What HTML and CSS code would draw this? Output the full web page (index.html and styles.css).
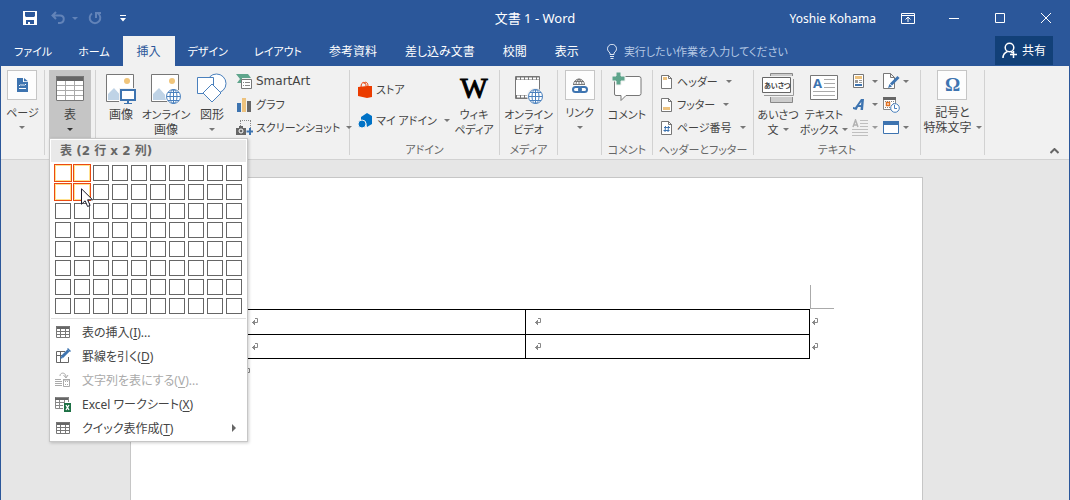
FILE: index.html
```html
<!DOCTYPE html>
<html lang="ja">
<head>
<meta charset="utf-8">
<title>文書 1 - Word</title>
<link rel="stylesheet" href="styles.css">
</head>
<body>
<div class="window">
  <header class="titlebar">
    <div class="quick">
      <button class="quick-btn" aria-label="上書き保存"><svg width="14" height="14" viewBox="0 0 14 14"><path fill="#fff" fill-rule="evenodd" d="M0 0h14v14H0zM2 1v4l1 1h8l1-1V1zM3 9v4h2v-2h2v2h4V9z"/></svg></button>
      <button class="quick-btn dim wide" aria-label="元に戻す"><svg width="14" height="14" viewBox="0 0 14 14" fill="none" stroke="currentColor" stroke-width="2"><path d="M5 1L1.500 4.500 5 8M2 4.500h7c5 0 5 7 0 7.500H7"/></svg><span class="arrow"></span></button>
      <button class="quick-btn dim" aria-label="やり直し"><svg width="14" height="14" viewBox="0 0 14 14" fill="none" stroke="currentColor" stroke-width="2"><path d="M4 2.500a5.300 5.300 0 1 0 6 0M8 7V2h5"/></svg></button>
      <button class="quick-btn last" aria-label="カスタマイズ"><svg width="6" height="7" viewBox="0 0 6 7" fill="#fff"><path d="M0 0h6v1H0zM0 3h6L3 6.500z"/></svg></button>
    </div>
    <h1 class="title">文書 1 - Word</h1>
    <div class="controls">
      <span class="user">Yoshie Kohama</span>
      <button class="ctl" aria-label="リボンの表示オプション"><svg width="14" height="11" viewBox="0 0 14 11" fill="none" stroke="#fff"><path d="M.5.5h13v10H.5zM.5 2.500h13M7 9V4M4.500 6.500L7 4l2.500 2.500"/></svg></button>
      <button class="ctl" aria-label="最小化"><svg width="10" height="10" viewBox="0 0 10 10" stroke="#fff"><path d="M0 5.500h10"/></svg></button>
      <button class="ctl" aria-label="最大化"><svg width="10" height="10" viewBox="0 0 10 10" fill="none" stroke="#fff"><path d="M.5.5h9v9h-9z"/></svg></button>
      <button class="ctl" aria-label="閉じる"><svg width="10" height="10" viewBox="0 0 10 10" stroke="#fff"><path d="M0 0l10 10M10 0L0 10"/></svg></button>
    </div>
  </header>

  <nav class="tabs">
    <button class="tab kana">ファイル</button>
    <button class="tab kana">ホーム</button>
    <button class="tab active">挿入</button>
    <button class="tab kana">デザイン</button>
    <button class="tab kana">レイアウト</button>
    <button class="tab">参考資料</button>
    <button class="tab">差し込み文書</button>
    <button class="tab">校閲</button>
    <button class="tab">表示</button>
    <label class="tell kana"><svg width="10" height="15" viewBox="0 0 10 15" fill="none" stroke="#dfe7f3"><path d="M3 10.500V9C1.500 7.500.5 6.500.5 4.800a4.300 4.300 0 0 1 9 0C9.500 6.500 8.500 7.500 7 9v1.500zM3 12.500h4M3.500 14.500h3"/></svg><input type="text" placeholder="実行したい作業を入力してください" aria-label="操作アシスト"></label>
    <button class="share"><svg width="16" height="17" viewBox="0 0 16 17" fill="none" stroke="#fff" stroke-width="1.500"><circle cx="7.500" cy="5.500" r="4.300"/><path d="M1 16c0-3.500 2-5.500 4.500-6.500M9 9.500l1.500 1.500M11.500 9v7M8 12.500h7"/></svg>共有</button>
  </nav>

  <section class="ribbon">
    <div class="group g-page">
      <div class="body">
        <button class="big boxed kana"><span class="icon"><svg width="11" height="14" viewBox="0 0 11 14"><path fill="#3e74b0" d="M0 0h6v4h5v10H0zM7 0l4 3.200H7z"/><path fill="none" stroke="#fff" d="M2 7.500h1l1-1 1 1 1-1 1 1 1-1h1M2 10.500h7"/></svg></span><span>ページ</span><span class="line"><span class="arrow"></span></span></button>
      </div>
    </div>

    <div class="group g-table">
      <div class="body">
        <button class="big pressed" aria-expanded="true"><span class="icon"><svg width="28" height="25" viewBox="0 0 28 25"><path fill="#fff" d="M0 0h28v25H0z"/><path fill="#666" d="M0 0h28v5H0z"/><path fill="none" stroke="#aaa" d="M1 9.500h26M1 14.500h26M1 19.500h26M9.500 5v19M18.500 5v19"/><path fill="none" stroke="#777" d="M.5.5h27v24H.5z"/></svg></span><span>表</span><span class="line"><span class="arrow dark"></span></span></button>
      </div>
      <div class="menu">
        <h2 class="menu-title">表 (2 行 x 2 列)</h2>
        <div class="picker"></div>
        <ul class="items">
          <li><button class="item"><svg width="16" height="16" viewBox="0 0 16 16"><path fill="#666" d="M1 2h14v3H1z"/><path fill="none" stroke="#777" d="M1.500 2.500h13v11h-13zM1 7.500h14M1 10.500h14M5.500 5v9M10.500 5v9"/></svg><span>表の挿入(<u>I</u>)...</span></button></li>
          <li><button class="item"><svg width="16" height="16" viewBox="0 0 16 16"><path fill="none" stroke="#666" d="M10 3.500H1.500v11h12V9M1 7.500h7M5.500 4v10"/><path stroke="#3e74b0" stroke-width="3" d="M13.500 2.500L7 9"/><path fill="#3e74b0" d="M5 11l1-3 2 2zM13 0l3 3-1 1-3-3z"/></svg><span>罫線を引く(<u>D</u>)</span></button></li>
          <li><button class="item" disabled><svg width="16" height="16" viewBox="0 0 16 16"><path fill="none" stroke="#aaa" d="M0 7.500h6M0 9.500h7M0 11.500h7M0 13.500h7M5 4c0-4 6-4 6 1M8.500 3l2.500 3 2-3M8.500 7.500h6v7h-6z"/><path fill="#aaa" d="M10 9h1v1h-1zM12 9h1v1h-1zM10 12h1v1h-1zM12 12h1v1h-1zM8 7h7v1.500H8z"/></svg><span>文字列を表にする(<u>V</u>)...</span></button></li>
          <li><button class="item"><svg width="16" height="16" viewBox="0 0 16 16"><path fill="#666" d="M0 1h14v3H0z"/><path fill="none" stroke="#888" d="M.5 1.500h13V6M.5 4v8.500H8M0 6.500h9M0 9.500h8M4.500 4v8M9.500 4v3"/><path fill="#1e7145" d="M9 7h7v9H9z"/><path stroke="#fff" stroke-width="1.300" d="M11 9l3 5M14 9l-3 5"/></svg><span>Excel ワークシート(<u>X</u>)</span></button></li>
          <li><button class="item"><svg width="16" height="16" viewBox="0 0 16 16"><path fill="#666" d="M1 2h14v3H1z"/><path fill="none" stroke="#777" d="M1.500 2.500h13v11h-13zM1 7.500h14M1 10.500h14M5.500 5v9M10.500 5v9"/></svg><span>クイック表作成(<u>T</u>)</span><i class="sub"></i></button></li>
        </ul>
        <svg class="cursor" width="13" height="20" viewBox="0 0 13 20"><path fill="#fff" stroke="#1a1a2a" d="M.5.8v15.400l3.600-3.400 2.500 5.700 2.500-1.100-2.500-5.600h5z"/></svg>
      </div>
    </div>

    <div class="group g-illust">
      <div class="body">
        <button class="big w-42"><span class="icon"><svg width="30" height="32" viewBox="0 0 30 32"><path fill="#fff" stroke="#777" d="M.5 2.500h27v27H.5z"/><path fill="#bfd3e6" d="M2 28V22l6-6 8 9v3z"/><circle cx="21" cy="9" r="3" fill="#f0c57c"/><path fill="#f1f1f1" d="M13 16h17v16H13z"/><path fill="#fff" stroke="#3e74b0" stroke-width="2" d="M15 18h14v10H15z"/><path fill="#3e74b0" d="M21 28h2v3h-2zM18 31h8v1h-8z"/></svg></span><span>画像</span></button>
        <button class="big w-48"><span class="icon"><svg width="30" height="32" viewBox="0 0 30 32"><path fill="#fff" stroke="#777" d="M.5 2.500h27v27H.5z"/><path fill="#bfd3e6" d="M2 28V22l6-6 8 9v3z"/><circle cx="21" cy="9" r="3" fill="#f0c57c"/><circle cx="22" cy="24" r="8" fill="#fff"/><g fill="none" stroke="#4a80bd"><circle cx="22.500" cy="24.500" r="7"/><ellipse cx="22.500" cy="24.500" rx="3.500" ry="7"/><path d="M22.500 17.500v14M15.500 24.500h14M17 20.500h11M17 28.500h11"/></g></svg></span><span class="kana">オンライン</span><span>画像</span></button>
        <button class="big w-44"><span class="icon"><svg width="30" height="32" viewBox="0 0 30 32" fill="#fff" stroke="#4a80bd"><circle cx="19.500" cy="11.500" r="9.500"/><path d="M.5 5.500h16v16H.5z"/><path d="M15 12l9 9-9 9-9-9z"/></svg></span><span>図形</span><span class="line"><span class="arrow"></span></span></button>
        <div class="rows kana">
          <button class="small"><svg width="17" height="17" viewBox="0 0 17 17"><path fill="#5fa58c" d="M0 1h12l3 4H6v5H1l3-4z"/><path fill="#fff" stroke="#777" d="M5.500 6.500h10v9h-10z"/><path stroke="#888" d="M7 9.500h1M9 9.500h5M7 12.500h1M9 12.500h5"/></svg><span class="latin">SmartArt</span></button>
          <button class="small"><svg width="17" height="17" viewBox="0 0 17 17"><path fill="#3e74b0" d="M1 7h4v9H1z"/><path fill="#edc27e" d="M6 2h4v14H6z"/><path fill="#666" d="M11 5h4v11h-4z"/></svg><span>グラフ</span></button>
          <button class="small"><svg width="17" height="17" viewBox="0 0 17 17"><path fill="none" stroke="#888" stroke-dasharray="1 1" d="M4 1.500h11M4.500 2v5M14.500 2v7"/><path fill="#666" d="M0 9h3V7h4v2h3v7H0z"/><circle cx="5" cy="12" r="2" fill="#666" stroke="#fff"/><path fill="#3e74b0" d="M13 9h2v2.500h2.500v2H15V16h-2v-2.500h-2.500v-2H13z"/></svg><span>スクリーンショット</span><span class="arrow"></span></button>
        </div>
      </div>
    </div>

    <div class="group g-addin">
      <div class="body kana">
        <div class="rows roomy">
          <button class="small"><svg width="14" height="17" viewBox="0 0 14 17"><path fill="#eb3c00" d="M0 6l9-1v12l-9-2zM9 5h5v11l-5 1z"/><path fill="none" stroke="#eb3c00" d="M3 6c0-6 5-6 5-1M6 3c1-3 4-2 4 2"/></svg><span>ストア</span></button>
          <button class="small"><svg width="14" height="15" viewBox="0 0 14 15"><path fill="#0072c6" d="M3 4l6-4 5 3v8l-5 3-1-5-5-2z"/><circle cx="4" cy="11" r="4" fill="#0072c6" stroke="#f1f1f1"/></svg><span>マイ アドイン</span><span class="arrow"></span></button>
        </div>
        <button class="big w-48"><span class="icon wiki">W</span><span>ウィキ<br>ペディア</span></button>
      </div>
      <div class="caption">アドイン</div>
    </div>

    <div class="group g-media">
      <div class="body kana">
        <button class="big w-56"><span class="icon"><svg width="30" height="32" viewBox="0 0 30 32"><path fill="#fff" stroke="#777" d="M1.500 4.500h24v22h-24z"/><path fill="none" stroke="#777" stroke-width="3" d="M1 6.500h25M1 24.500h25"/><path fill="none" stroke="#fff" stroke-width="2" stroke-dasharray="3 1" d="M3 6.500h22M3 24.500h22"/><circle cx="21" cy="24" r="8" fill="#f1f1f1"/><g fill="#fff" stroke="#4a80bd"><circle cx="21.500" cy="24.500" r="7"/><ellipse cx="21.500" cy="24.500" rx="3.500" ry="7"/><path d="M21.500 17.500v14M14.500 24.500h14M16 20.500h11M16 28.500h11"/></g></svg></span><span>オンライン<br>ビデオ</span></button>
      </div>
      <div class="caption">メディア</div>
    </div>

    <div class="group g-link">
      <div class="body">
        <button class="big boxed kana"><span class="icon"><svg width="16" height="16" viewBox="0 0 16 16" fill="none"><g stroke="#777"><path d="M1.500 8a5.500 6 0 0 1 11 0M1 7.500h12M2 4.500h10M7 2v6M4 8c0-3 1-5 3-6 2 1 3 3 3 6"/></g><g stroke="#3e74b0" stroke-width="2"><rect x="1" y="10" width="8" height="5" rx="2.500"/><rect x="7" y="10" width="8" height="5" rx="2.500"/></g></svg></span><span>リンク</span><span class="line"><span class="arrow"></span></span></button>
      </div>
    </div>

    <div class="group g-comment">
      <div class="body">
        <button class="big w-48 kana"><span class="icon"><svg width="30" height="32" viewBox="0 0 30 32"><path fill="#fff" stroke="#777" d="M4 4.500h23a2 2 0 0 1 2 2v15a2 2 0 0 1-2 2H14l-5 5v-5H4a1.500 1.500 0 0 1-1.500-1.500V6z"/><path fill="#5fa58c" stroke="#f1f1f1" d="M4 0h5v4h4v5H9v4H4V9H0V4h4z"/></svg></span><span>コメント</span></button>
      </div>
      <div class="caption">コメント</div>
    </div>

    <div class="group g-header">
      <div class="body">
        <div class="rows kana">
          <button class="small"><svg width="11" height="14" viewBox="0 0 11 14"><path fill="#fff" stroke="#777" d="M.5.5h7l3 3v10H.5z"/><path fill="none" stroke="#777" d="M7.500 0v3.500H11"/><path fill="#edc27e" d="M2 2h4v3H2z"/></svg><span>ヘッダー</span><span class="arrow"></span></button>
          <button class="small"><svg width="11" height="14" viewBox="0 0 11 14"><path fill="#fff" stroke="#777" d="M.5.5h7l3 3v10H.5z"/><path fill="none" stroke="#777" d="M7.500 0v3.500H11"/><path fill="#edc27e" d="M2 9h7v3H2z"/></svg><span>フッター</span><span class="arrow"></span></button>
          <button class="small"><svg width="11" height="14" viewBox="0 0 11 14"><path fill="#fff" stroke="#777" d="M.5.5h7l3 3v10H.5z"/><path fill="none" stroke="#777" d="M7.500 0v3.500H11"/><path stroke="#3e74b0" d="M4.500 5L4 11M7.500 5L7 11M3 6.500h6M2.500 9.500h6"/></svg><span>ページ番号</span><span class="arrow"></span></button>
        </div>
      </div>
      <div class="caption">ヘッダーとフッター</div>
    </div>

    <div class="group g-text">
      <div class="body">
        <button class="big w-46 kana"><span class="icon"><svg width="32" height="32" viewBox="0 0 32 32"><path fill="#ccc" stroke="#888" d="M8.500 1.500h22v5h-22zM8.500 24.500h22v6h-22z"/><path fill="#f1f1f1" d="M0 4h32v21H0z"/><path fill="#fff" stroke="#666" d="M.5 5.500h28v15H.5z"/><path fill="none" stroke="#999" d="M2 23.500h29.500V7"/><text x="2" y="16" font-size="7" font-weight="700" fill="#444">あいさつ</text></svg></span><span>あいさつ</span><span class="line">文<span class="arrow"></span></span></button>
        <button class="big w-46 kana"><span class="icon"><svg width="28" height="32" viewBox="0 0 28 32"><path fill="#fff" stroke="#777" d="M.5 3.500h27v24H.5z"/><path fill="none" stroke="#aaa" d="M14 7.500h11M14 11.500h11M14 15.500h11M3 19.500h22M3 23.500h22"/><text x="3" y="16" font-size="13" font-weight="700" fill="#3e74b0">A</text></svg></span><span>テキスト</span><span class="line">ボックス<span class="arrow"></span></span></button>
        <div class="rows tools first">
          <button class="tool" aria-label="クイック パーツ"><svg width="17" height="17" viewBox="0 0 17 17"><path fill="#fff" stroke="#777" d="M1.500 1.500h10v13h-10z"/><path fill="#edc27e" d="M3 3h7v3H3z"/><path fill="#999" d="M3 7h3v3H3zM7 7h3v1H7zM7 9h3v1H7z"/><path fill="#3e74b0" d="M3 11h7v2H3z"/></svg><span class="arrow"></span></button>
          <button class="tool" aria-label="ワードアート"><svg width="17" height="17" viewBox="0 0 17 17"><path fill="#3e74b0" fill-rule="evenodd" d="M1 11l2 .5L9 3h3l-1 11H8.500l.3-3H6l-1.500 3L1 13zM7 9h2l.3-3z"/></svg><span class="arrow"></span></button>
          <button class="tool" aria-label="ドロップ キャップ" disabled><svg width="17" height="17" viewBox="0 0 17 17"><path fill="none" stroke="#aaa" d="M8 1.500h8M8 4.500h8M8 7.500h8M0 10.500h16M0 13.500h16M0 16.500h16"/><path fill="none" stroke="#999" stroke-width="1.500" d="M1 8l2.500-7L6 8M2 6h3"/></svg><span class="arrow"></span></button>
        </div>
        <div class="rows tools">
          <button class="tool" aria-label="署名欄"><svg width="17" height="17" viewBox="0 0 17 17"><path fill="#fff" stroke="#777" d="M.5.5h7l4 4v11H.5zM7.500.5v4h4"/><path stroke="#3e74b0" stroke-width="3" d="M15.500 4L8 11.500"/><path fill="#3e74b0" d="M5 15l1.500-4 2.500 2.500z"/></svg><span class="arrow"></span></button>
          <button class="tool" aria-label="日付と時刻"><svg width="17" height="17" viewBox="0 0 17 17"><path fill="#fff" stroke="#888" d="M.5 1.500h12v12H.5z"/><path fill="#666" d="M0 1h13v3H0z"/><path stroke="#888" stroke-dasharray="1 1" d="M2 5.500h10M2 11.500h5M10.500 5v4"/><path fill="#fff" stroke="#e07020" stroke-width="1.500" d="M3.500 6.500h3v3h-3z"/><circle cx="12" cy="12" r="4.300" fill="#fff" stroke="#4a80bd"/><path fill="none" stroke="#4a80bd" d="M11.500 9v3.500H14"/></svg></button>
          <button class="tool" aria-label="オブジェクト"><svg width="17" height="17" viewBox="0 0 17 17"><path fill="#fff" stroke="#3e74b0" d="M.5 2.500h15v12H.5z"/><path fill="#3e74b0" d="M0 2h16v4H0z"/></svg><span class="arrow"></span></button>
        </div>
      </div>
      <div class="caption">テキスト</div>
    </div>

    <div class="group g-symbol">
      <div class="body">
        <button class="big boxed"><span class="icon omega">Ω</span><span>記号と</span><span class="line">特殊文字<span class="arrow"></span></span></button>
      </div>
    </div>

    <button class="collapse" aria-label="リボンを折りたたむ"><svg width="9" height="6" viewBox="0 0 9 6" fill="none" stroke="#666" stroke-width="2"><path d="M.5 5l4-4 4 4"/></svg></button>
  </section>

  <main class="workspace">
    <article class="page">
      <i class="corner"></i>
      <table class="doc-table">
        <tr><td><svg class="mark" width="8" height="8" viewBox="0 0 8 8"><path d="M4 .5h2.500v4H1M3.500 2v5M2.500 3v3"/></svg></td><td><svg class="mark" width="8" height="8" viewBox="0 0 8 8"><path d="M4 .5h2.500v4H1M3.500 2v5M2.500 3v3"/></svg></td><td class="end"><svg class="mark" width="8" height="8" viewBox="0 0 8 8"><path d="M4 .5h2.500v4H1M3.500 2v5M2.500 3v3"/></svg></td></tr>
        <tr class="last"><td><svg class="mark" width="8" height="8" viewBox="0 0 8 8"><path d="M4 .5h2.500v4H1M3.500 2v5M2.500 3v3"/></svg></td><td><svg class="mark" width="8" height="8" viewBox="0 0 8 8"><path d="M4 .5h2.500v4H1M3.500 2v5M2.500 3v3"/></svg></td><td class="end"><svg class="mark" width="8" height="8" viewBox="0 0 8 8"><path d="M4 .5h2.500v4H1M3.500 2v5M2.500 3v3"/></svg></td></tr>
      </table>
      <p class="para"><svg class="mark" width="8" height="8" viewBox="0 0 8 8"><path d="M4 .5h2.500v4H1M3.500 2v5M2.500 3v3"/></svg></p>
    </article>
  </main>
</div>
<script src="script.js"></script>
</body>
</html>
```
FILE: styles.css
```css
* { box-sizing: border-box; }

body {
  margin: 0;
  font: 12px/15px "Noto Sans", "Noto Sans CJK JP", sans-serif;
  font-feature-settings: "palt";
  color: #444;
}

button, input {
  margin: 0;
  padding: 0;
  border: 0;
  background: none;
  font: inherit;
  font-feature-settings: inherit;
  color: inherit;
}

svg { display: block; flex: none; }

.window {
  display: flex;
  flex-direction: column;
  min-height: 100vh;
  border: solid #2b579a;
  border-width: 0 1px;
  overflow: hidden;
}

/* Title bar */
.titlebar {
  display: grid;
  grid-template-columns: 1fr auto 1fr;
  align-items: center;
  height: 36px;
  background: #2b579a;
  color: #fff;
}

.quick { display: flex; align-items: center; padding-left: 22px; }
.quick-btn { display: flex; align-items: center; gap: 7px; height: 34px; margin-right: 14px; }
.quick-btn.wide { margin-right: 10px; }
.quick-btn.last { margin-left: 4px; }
.dim { color: #6283b8; }
.dim .arrow { border-top-color: #6283b8; }
.title { margin: 0; font-size: 13px; font-weight: 400; }
.controls { display: flex; align-items: center; justify-content: flex-end; }
.user { margin-right: 9px; font-size: 12px; white-space: nowrap; }
.ctl { display: flex; align-items: center; justify-content: center; width: 46px; height: 32px; }

/* Tabs */
.tabs { display: flex; align-items: stretch; height: 30px; background: #2b579a; color: #fff; }
.tab { padding: 0 14px; white-space: nowrap; }
.tab.kana { padding: 0 13px; }
.tab.active { background: #f1f1f1; color: #2b579a; }
.tell { display: flex; flex: 1; align-items: center; gap: 7px; margin-left: 14px; }
.tell input { flex: 1; min-width: 0; height: 20px; }
.tell input::placeholder { color: #b5c8e4; opacity: 1; }
.share {
  display: flex;
  align-items: center;
  justify-content: center;
  gap: 4px;
  width: 58px;
  height: 29px;
  margin-right: 16px;
  background: #124078;
}

/* Labels written mostly in kana are set one size down */
.kana { font-size: 11px; }

/* Ribbon */
.ribbon {
  display: flex;
  padding: 4px 0;
  border-bottom: 1px solid #d2d2d2;
  background: #f1f1f1;
}
.group {
  display: flex;
  flex: none;
  flex-direction: column;
  height: 85px;
  border-right: 1px solid #d2d2d2;
}
.body { display: flex; justify-content: center; height: 73px; }
.caption { height: 12px; font-size: 11px; line-height: 14px; text-align: center; white-space: nowrap; color: #666; }

.g-page, .g-link { width: 44px; }
.g-table, .g-comment { width: 51px; }
.g-illust { width: 254px; }
.g-addin { width: 150px; }
.g-media { width: 58px; }
.g-header { width: 101px; }
.g-text { width: 167px; }
.g-symbol { width: 64px; }
.g-table .body, .g-illust .body, .g-addin .body, .g-header .body, .g-text .body { justify-content: flex-start; }
.g-table .body, .g-illust .body { padding-left: 4px; }
.g-addin .body, .g-header .body { padding-left: 8px; }
.g-text .body { padding-left: 1px; }

.big {
  display: flex;
  flex: none;
  flex-direction: column;
  align-items: center;
  padding-top: 2px;
  white-space: nowrap;
}
.big .icon { display: flex; align-items: center; justify-content: center; height: 32px; margin-bottom: 3px; }
.big.boxed { padding-top: 0; }
.boxed .icon { width: 30px; height: 30px; margin-bottom: 5px; border: 1px solid #c6c6c6; background: #fdfdfd; }
.pressed { width: 42px; height: 69px; background: #c5c5c5; }
.w-42 { width: 42px; }
.w-44 { width: 44px; }
.w-46 { width: 46px; }
.w-48 { width: 48px; }
.w-56 { width: 56px; }

.line { display: flex; align-items: center; justify-content: center; gap: 4px; height: 15px; }
.arrow { flex: none; border: solid transparent; border-width: 3px 3px 0; border-top-color: #777; }
.arrow.dark { border-top-color: #333; }

.big .wiki { font: 400 29px/32px "Liberation Serif", serif; color: #000; -webkit-text-stroke: 1px #000; }
.big .omega { font: 700 19px/28px "Liberation Serif", serif; color: #3e74b0; }

.rows { display: flex; flex: none; flex-direction: column; }
.g-illust .rows { margin-left: 2px; }
.small, .tool { display: flex; align-items: center; gap: 3px; height: 23px; white-space: nowrap; }
.small .arrow { margin-left: 3px; }
.latin { font-family: "DejaVu Sans", sans-serif; font-size: 12px; }
.g-header .small { gap: 5px; }
.roomy { width: 92px; padding-top: 4px; }
.roomy .small { height: 31px; gap: 4px; }
.tools { width: 31px; }
.tools.first { margin-left: 5px; }
.tool:disabled { opacity: 0.7; }
.collapse { align-self: flex-end; margin: 0 10px 0 auto; padding-bottom: 1px; }

/* Table menu */
.g-table { position: relative; }
.menu {
  position: absolute;
  z-index: 2;
  top: 68px;
  left: 4px;
  width: 199px;
  padding: 1px;
  border: 1px solid #c6c6c6;
  background: #fff;
  box-shadow: 1px 1px 3px rgba(0, 0, 0, 0.2);
}
.menu-title {
  margin: 0;
  padding: 3px 9px;
  background: #e9e9e9;
  font: 700 12px/16px "DejaVu Sans", "Noto Sans CJK JP", sans-serif;
  color: #666;
}
.picker {
  display: grid;
  grid-template-columns: repeat(10, 16px);
  grid-auto-rows: 16px;
  gap: 3px;
  padding: 3px 4px 4px;
  border-bottom: 1px solid #e1e1e1;
}
.cell { border: 1px solid #666; background: #fff; }
.cell.on { margin: -1px; border-color: #eb4a12; box-shadow: inset 0 0 0 1px #ffe28f; }
.items { margin: 0; padding: 1px 0 0; list-style: none; }
.item { display: flex; align-items: center; gap: 11px; width: 100%; height: 24px; padding: 0 10px 0 4px; white-space: nowrap; }
.item:disabled { color: #aaa; }
.item u { text-underline-offset: 2px; }
.sub { margin-left: auto; border: solid transparent; border-width: 4px 0 4px 4px; border-left-color: #666; }
.cursor { position: absolute; top: 49px; left: 31px; }

/* Document */
.workspace { display: flex; flex: 1; justify-content: center; padding: 17px 17px 0 0; background: #e6e6e6; }
.page { width: 793px; padding: 107px 88px 0; border: 1px solid #c6c6c6; border-bottom: 0; background: #fff; }
.corner { display: block; width: 24px; height: 24px; margin-left: auto; border: solid #aaa; border-width: 0 0 1px 1px; }
.doc-table { width: 593px; margin-left: 23px; border-collapse: collapse; table-layout: fixed; }
.doc-table td { height: 25px; padding: 0 0 0 8px; border: 1px solid #000; }
.doc-table .last td { height: 24px; }
.doc-table .end { width: 26px; padding-left: 1px; border-width: 0 0 0 1px; }
.para { margin: 9px 0 0 24px; }
.mark { fill: none; stroke: #888; }
```
FILE: script.js
```js
const ROWS = 8;
const COLS = 10;
const picker = document.querySelector('.picker');
const heading = document.querySelector('.menu-title');

function select(rows, cols) {
  heading.textContent = `表 (${rows} 行 x ${cols} 列)`;
  [...picker.children].forEach((cell, i) => {
    cell.classList.toggle('on', Math.floor(i / COLS) < rows && i % COLS < cols);
  });
}

for (let i = 0; i < ROWS * COLS; i++) {
  const cell = document.createElement('button');
  const row = Math.floor(i / COLS) + 1;
  const col = (i % COLS) + 1;
  cell.className = 'cell';
  cell.setAttribute('aria-label', `${row} 行 ${col} 列`);
  cell.addEventListener('mouseenter', () => select(row, col));
  picker.append(cell);
}

select(2, 2);
```
